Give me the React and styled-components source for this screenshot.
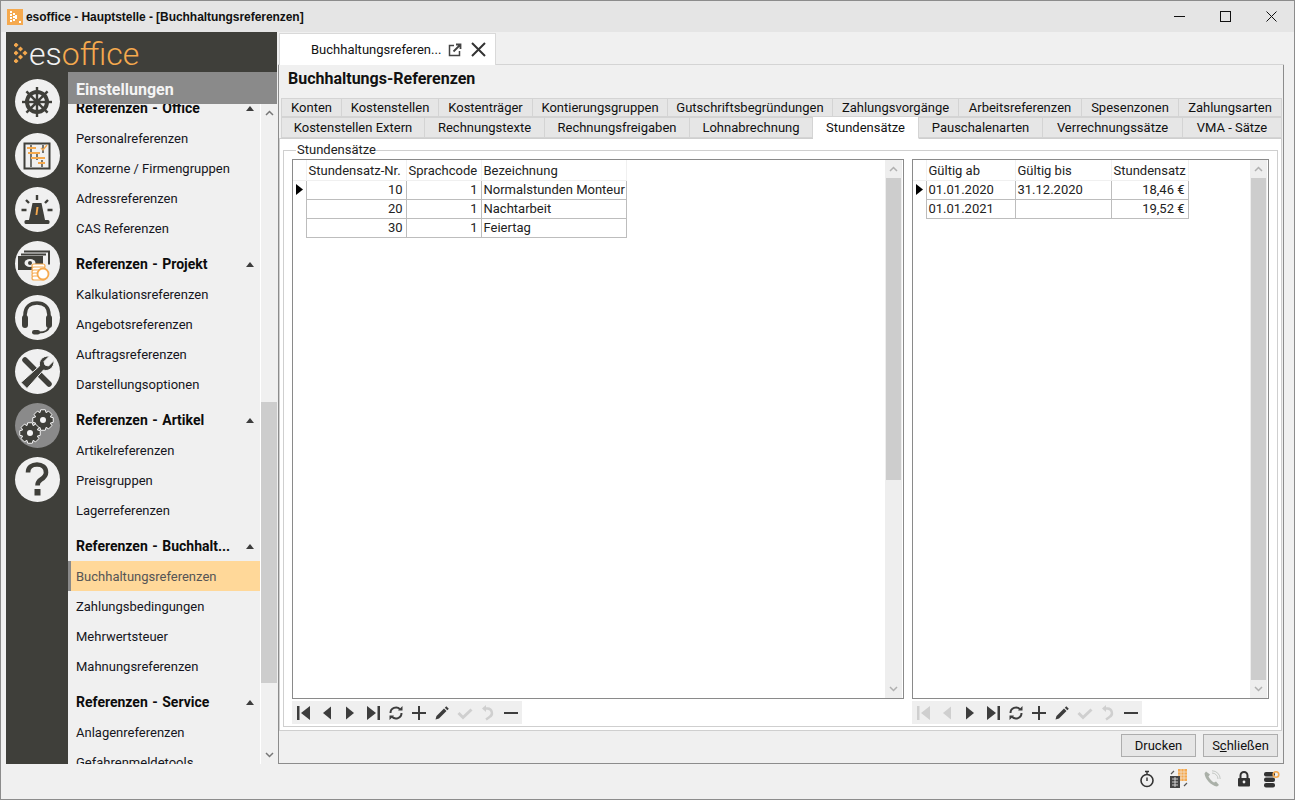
import React from "react";
import styled, { createGlobalStyle } from "styled-components";

const GlobalStyle = createGlobalStyle`
  html, body {
    margin: 0;
    padding: 0;
    background: #f0f0f0;
  }
  * {
    box-sizing: border-box;
  }
`;

const DARK = "#3f3f3a";
const ORANGE = "#f5a94e";

const Window = styled.div`
  width: 1295px;
  height: 800px;
  display: flex;
  flex-direction: column;
  overflow: hidden;
  background: #f0f0f0;
  border: 1px solid #8c8c8c;
  font-family: Roboto, "Liberation Sans", sans-serif;
  font-size: 13px;
  color: #111;
`;

const TitleBar = styled.div`
  height: 31px;
  flex: none;
  display: flex;
  align-items: center;
  background: #e5e5e5;
  padding-left: 6px;
`;

const TitleText = styled.div`
  margin-left: 3px;
  font-family: "Liberation Sans", Arial, sans-serif;
  font-size: 12px;
  font-weight: 700;
  letter-spacing: -0.05px;
  flex: 1;
`;

const WinButton = styled.div`
  width: 46px;
  height: 31px;
  display: flex;
  align-items: center;
  justify-content: center;
`;

const Body = styled.div`
  height: 732px;
  flex: none;
  display: flex;
  padding-left: 5px;
`;

const Sidebar = styled.div`
  width: 271px;
  flex: none;
  display: flex;
  flex-direction: column;
  background: ${DARK};
`;

const LogoBar = styled.div`
  height: 40px;
  flex: none;
  display: flex;
  align-items: center;
  padding-left: 8px;
  gap: 1px;
`;

const LogoText = styled.div`
  font-family: Roboto, sans-serif;
  font-weight: 300;
  font-size: 32px;
  line-height: 40px;
  margin-top: 3px;
  color: #f2f2f2;
  span {
    color: ${ORANGE};
  }
`;

const SideBody = styled.div`
  flex: 1;
  min-height: 0;
  display: flex;
`;

const Rail = styled.div`
  width: 62px;
  flex: none;
  display: flex;
  flex-direction: column;
  align-items: center;
  gap: 9px;
  padding-top: 7px;
`;

const RailButton = styled.div`
  width: 45px;
  height: 45px;
  border-radius: 50%;
  flex: none;
  display: flex;
  align-items: center;
  justify-content: center;
  background: ${(p) => (p.$active ? "#8a8a8a" : "#f0f0f0")};
`;

const NavPane = styled.div`
  flex: 1;
  min-width: 0;
  display: flex;
  flex-direction: column;
  background: #f0f0f0;
`;

const NavTitle = styled.div`
  height: 32px;
  flex: none;
  background: #8a8a8a;
  color: #f4f4f4;
  font-size: 16px;
  font-weight: 700;
  line-height: 36px;
  padding-left: 8px;
`;

const NavScroll = styled.div`
  flex: 1;
  min-height: 0;
  display: flex;
`;

const NavList = styled.div`
  flex: 1;
  min-width: 0;
  overflow: hidden;
`;

const NavInner = styled.div`
  margin-top: -17px;
`;

const NavHead = styled.div`
  height: 36px;
  padding: 6px 6px 0 8px;
  display: flex;
  align-items: center;
  justify-content: space-between;
  font-size: 14px;
  font-weight: 700;
  word-spacing: 1px;
  color: #0c0c0c;
`;

const NavItem = styled.div`
  height: 30px;
  line-height: 32px;
  padding-left: ${(p) => (p.$active ? "5px" : "8px")};
  font-size: 13px;
  color: ${(p) => (p.$active ? "#555" : "#151520")};
  background: ${(p) => (p.$active ? "#ffd899" : "transparent")};
  border-left: ${(p) => (p.$active ? "3px solid #8a8a8a" : "none")};
`;

const ScrollBar = styled.div`
  width: 17px;
  flex: none;
  display: flex;
  flex-direction: column;
  align-items: center;
  background: ${(p) => p.$bg || "#f0f0f0"};
  border-left: ${(p) => (p.$line ? "1px solid #fff" : "none")};
`;

const ScrollArrow = styled.div`
  height: 18px;
  flex: none;
  width: 100%;
  display: flex;
  align-items: center;
  justify-content: center;
`;

const ScrollTrack = styled.div`
  flex: 1;
  min-height: 0;
  width: 100%;
  display: flex;
  flex-direction: column;
  padding: ${(p) => p.$top || 0}px ${(p) => p.$inset || 0}px 0;
`;

const ScrollThumb = styled.div`
  height: ${(p) => p.$h}px;
  flex: none;
  background: #cdcdcd;
`;

const Main = styled.div`
  flex: 1;
  min-width: 0;
  margin: 0 10px 0 1px;
  display: flex;
  flex-direction: column;
`;

const DocTabs = styled.div`
  height: 33px;
  flex: none;
  display: flex;
  align-items: flex-end;
  padding-left: 1px;
  border-bottom: 1px solid #d4d4d4;
`;

const DocTab = styled.div`
  width: 217px;
  height: 32px;
  margin-bottom: -1px;
  display: flex;
  align-items: center;
  gap: 7px;
  padding-left: 31px;
  background: #fff;
  border: 1px solid #d9d9d9;
  border-bottom: none;
  font-size: 13px;
`;

const DocPane = styled.div`
  flex: 1;
  min-height: 0;
  display: flex;
  flex-direction: column;
  border: 1px solid #8c8c8c;
  border-top: none;
`;

const Heading = styled.div`
  height: 33px;
  flex: none;
  line-height: 28px;
  padding-left: 9px;
  font-size: 16px;
  font-weight: 700;
`;

const TabRow = styled.div`
  display: flex;
  height: ${(p) => p.$h}px;
  flex: none;
  padding: 0 2px 0 2px;
  position: relative;
  z-index: ${(p) => p.$z || 0};
`;

const Tab = styled.div`
  width: ${(p) => p.$w}px;
  flex: none;
  display: flex;
  align-items: center;
  justify-content: center;
  font-size: 13px;
  white-space: nowrap;
  background: ${(p) => (p.$active ? "#fff" : "#e6e6e6")};
  border: 1px solid #d4d4d4;
  border-left: ${(p) => (p.$first ? "1px solid #d4d4d4" : "none")};
  border-bottom: ${(p) => (p.$active ? "1px solid #fff" : "1px solid #d4d4d4")};
  ${(p) => p.$active && "margin-top: -1px; height: calc(100% + 2px);"}
`;

const TabPanel = styled.div`
  flex: 1;
  min-height: 0;
  background: #fff;
  border: 1px solid #cfcfcf;
  margin: 0 1px 0 0;
  padding: 4px 3px 3px 3px;
  display: flex;
`;

const Group = styled.fieldset`
  flex: 1;
  min-width: 0;
  margin: 0;
  padding: 2px 8px 0 8px;
  border: 1px solid #cfcfcf;
  display: flex;
  gap: 8px;
`;

const GroupLegend = styled.legend`
  margin-left: 4px;
  padding: 0 0 0 1px;
  font-size: 13px;
  line-height: 14px;
  color: #222;
`;

const GridColumn = styled.div`
  width: ${(p) => p.$w}px;
  flex: none;
  display: flex;
  flex-direction: column;
`;

const GridBox = styled.div`
  height: 540px;
  flex: none;
  display: flex;
  padding-right: 1px;
  border: 1px solid #8a8a8a;
  background: #fff;
`;

const GridArea = styled.div`
  flex: 1;
  min-width: 0;
`;

const Table = styled.table`
  width: ${(p) => p.$w}px;
  border-collapse: collapse;
  table-layout: fixed;
  font-size: 13px;
`;

const HeadCell = styled.th`
  width: ${(p) => p.$w}px;
  height: 20px;
  padding: 1px 3px 0 2px;
  font-weight: 400;
  text-align: left;
  white-space: nowrap;
  overflow: hidden;
  border-right: 1px solid #f0f0f0;
  border-bottom: 1px solid #f0f0f0;
  color: #222;
`;

const Cell = styled.td`
  height: 19px;
  padding: 1px 3px 0 2px;
  line-height: 16px;
  text-align: ${(p) => (p.$right ? "right" : "left")};
  white-space: nowrap;
  overflow: hidden;
  border: 1px solid #bdbdbd;
  color: #222;
`;

const MarkerCell = styled.td`
  height: 19px;
  padding: 0 0 0 3px;
  border: none;
  line-height: 0;
`;

const Pager = styled.div`
  height: 23px;
  width: 230px;
  margin-top: 2px;
  display: flex;
  align-items: center;
  background: #efefef;
`;

const PagerButton = styled.div`
  width: 23px;
  flex: none;
  display: flex;
  justify-content: center;
  color: ${(p) => (p.$off ? "#cfcfcf" : "#3d3d3d")};
`;

const Footer = styled.div`
  height: 32px;
  flex: none;
  display: flex;
  justify-content: flex-end;
  align-items: flex-start;
  gap: 7px;
  padding: 3px 5px 0 0;
`;

const Button = styled.div`
  width: 75px;
  height: 23px;
  display: flex;
  align-items: center;
  justify-content: center;
  font-size: 13px;
  background: #e6e6e6;
  border: 1px solid #adadad;
  u {
    text-decoration: underline;
  }
`;

const StatusBar = styled.div`
  flex: 1;
  min-height: 0;
  display: flex;
  align-items: center;
  justify-content: flex-end;
  padding: 0 10px 6px 0;
`;

const StatusIcon = styled.div`
  width: ${(p) => p.$w}px;
  flex: none;
  display: flex;
  justify-content: center;
`;

// gear outline, used for the settings button in the rail
const gearPath = (cx, cy, r, teeth) => {
  const pts = [];
  const step = (Math.PI * 2) / teeth;
  for (let i = 0; i < teeth; i++) {
    const a = i * step;
    [
      [-0.5, 0.76],
      [-0.28, 1],
      [0.28, 1],
      [0.5, 0.76],
    ].forEach(([o, k]) => {
      const t = a + o * step;
      pts.push(`${(cx + Math.cos(t) * r * k).toFixed(2)} ${(cy + Math.sin(t) * r * k).toFixed(2)}`);
    });
  }
  return "M" + pts.join("L") + "Z";
};

const Diamonds = () => (
  <svg width="14" height="20" viewBox="0 0 14 20" fill={ORANGE} style={{ marginTop: 2 }}>
    {[
      [2, 2],
      [2, 10],
      [2, 18],
      [6.5, 6],
      [6.5, 14],
      [11, 10],
    ].map(([x, y]) => (
      <rect key={`${x}-${y}`} x={x - 1.8} y={y - 1.8} width="3.6" height="3.6" transform={`rotate(45 ${x} ${y})`} />
    ))}
  </svg>
);

const AppIcon = () => (
  <svg width="16" height="16" viewBox="0 0 16 16">
    <rect width="16" height="16" fill="#f5a94e" />
    {[
      [3, 2],
      [3, 5],
      [3, 8],
      [3, 11],
      [6, 4],
      [6, 7],
      [6, 10],
      [8, 6],
      [8, 8],
    ].map(([x, y]) => (
      <rect key={`${x}-${y}`} x={x} y={y} width="2" height="2" fill="#fff" />
    ))}
    <rect x="12" y="12" width="2" height="2" fill="#fff" />
  </svg>
);

const WheelIcon = () => (
  <svg width="32" height="32" viewBox="0 0 32 32" stroke={DARK} fill="none">
    {[0, 45, 90, 135].map((a) => (
      <line key={a} x1="1" y1="16" x2="31" y2="16" strokeWidth="2.4" transform={`rotate(${a} 16 16)`} />
    ))}
    <circle cx="16" cy="16" r="10" strokeWidth="4" />
    <circle cx="16" cy="16" r="3.6" fill={DARK} strokeWidth="0" />
  </svg>
);

const BoardIcon = () => (
  <svg width="28" height="28" viewBox="0 0 28 28" fill="none">
    <rect x="1.5" y="1.5" width="25" height="25" stroke={DARK} strokeWidth="2" />
    <path d="M8 3v22M20 3v8M14 12v6M19 18v7" stroke={DARK} strokeWidth="1.4" />
    <path d="M4 6h9M5 11h12M8 16h14M15 21h7" stroke={ORANGE} strokeWidth="2" />
    <path d="M18 6l2 2 4-5" stroke={ORANGE} strokeWidth="1.4" />
  </svg>
);

const AlarmIcon = () => (
  <svg width="34" height="34" viewBox="0 0 34 34">
    <path d="M12.5 10h9l3.500 17h-16z" fill={DARK} />
    <path d="M16.5 14h2l-1.200 8h-1.800z" fill={ORANGE} />
    <rect x="4.5" y="27" width="25" height="4" rx="1.5" fill={DARK} />
    <path d="M17 2v5M6 7l3 3M28 7l-3 3M1.5 17h5M27.5 17h5" stroke={DARK} strokeWidth="2.4" />
  </svg>
);

const MoneyIcon = () => (
  <svg width="38" height="34" viewBox="0 0 38 34">
    <path d="M6 4.500h25v13M3 7.500h25" fill="none" stroke={DARK} strokeWidth="2" />
    <rect x="0" y="9" width="25" height="14" fill={DARK} />
    <ellipse cx="12" cy="16" rx="5.500" ry="4" fill="#f0f0f0" />
    <circle cx="12" cy="16" r="2" fill={DARK} />
    {[18, 21, 24, 27, 30].map((y) => (
      <rect key={y} x="14" y={y - 1} width="13" height="4" rx="2" fill="#fff" stroke={ORANGE} strokeWidth="1.2" />
    ))}
    <circle cx="25" cy="27" r="5.500" fill="#fff" stroke={ORANGE} strokeWidth="1.800" />
  </svg>
);

const HeadsetIcon = () => (
  <svg width="34" height="36" viewBox="0 0 34 36" fill="none">
    <path d="M5 18v-3C5 7 10 3 17 3s12 4 12 12v3" stroke={DARK} strokeWidth="3.600" />
    <rect x="2" y="15" width="6" height="13" rx="3" fill={DARK} />
    <rect x="26" y="15" width="6" height="13" rx="3" fill={DARK} />
    <path d="M29 26c0 4-4 6.500-10 6.500" stroke={DARK} strokeWidth="2" />
    <rect x="12" y="30" width="8" height="4.500" rx="2.200" fill={DARK} />
  </svg>
);

const ToolsIcon = () => (
  <svg width="36" height="36" viewBox="0 0 36 36" fill="none">
    <path d="M6 6l24 24" stroke={DARK} strokeWidth="5.500" strokeLinecap="round" />
    <path d="M8 34.500L2 28.500 20.500 12C19.500 7 23 1.500 30.500 2L25 7.500 26 11l3.500 1L35 6.500C35.500 14 29 18 24.500 16z" fill={DARK} stroke="#f0f0f0" strokeWidth="1" />
  </svg>
);

const GearsIcon = () => (
  <svg width="36" height="36" viewBox="0 0 36 36">
    <path d={gearPath(24, 12, 10.5, 8)} fill={DARK} stroke="#f4f4f4" strokeWidth="1" />
    <circle cx="24" cy="12" r="3" fill="#f4f4f4" />
    <path d={gearPath(11, 25, 10.5, 8)} fill={DARK} stroke="#f4f4f4" strokeWidth="1" />
    <circle cx="11" cy="25" r="3" fill="#f4f4f4" />
  </svg>
);

const QuestionIcon = () => (
  <svg width="24" height="36" viewBox="0 0 24 36" fill="none">
    <path d="M3 10.500C3 5.500 7 2.500 12 2.500s9 3 9 8c0 3.500-2.500 5.500-5 7-2.500 1.500-3.500 3-3.500 6" stroke={DARK} strokeWidth="4.600" />
    <rect x="9.5" y="27" width="6" height="6.5" fill={DARK} />
  </svg>
);

const CollapseMark = () => (
  <svg width="8" height="5" viewBox="0 0 8 5">
    <path d="M4 0l4 5H0z" fill="#3d3d3d" />
  </svg>
);

const Chevron = ({ down, color = "#777" }) => (
  <svg width="9" height="6" viewBox="0 0 9 6" fill="none">
    <path d={down ? "M1 1l3.500 3.500L8 1" : "M1 5l3.500-3.500L8 5"} stroke={color} strokeWidth="1.5" />
  </svg>
);

const Marker = () => (
  <svg width="7" height="11" viewBox="0 0 7 11">
    <path d="M0 0l7 5.500-7 5.500z" fill="#000" />
  </svg>
);

const PagerGlyph = ({ kind }) => {
  const c = "currentColor";
  const shapes = {
    first: (
      <>
        <rect x="2" y="2" width="2.5" height="14" fill={c} />
        <path d="M15 2v14L6 9z" fill={c} />
      </>
    ),
    prev: <path d="M13 2.500v13L5 9z" fill={c} />,
    next: <path d="M5 2.500v13L13 9z" fill={c} />,
    last: (
      <>
        <rect x="13.5" y="2" width="2.5" height="14" fill={c} />
        <path d="M3 2v14l9-7z" fill={c} />
      </>
    ),
    refresh: (
      <>
        <path d="M3.500 9a5.500 5.500 0 0 1 9.500-3.800M14.500 9a5.500 5.500 0 0 1-9.500 3.800" fill="none" stroke={c} strokeWidth="2" />
        <path d="M11 6.500h4.500V2zM7 11.500H2.500V16z" fill={c} />
      </>
    ),
    add: <path d="M9 2v14M2 9h14" stroke={c} strokeWidth="2" />,
    edit: (
      <>
        <path d="M2.500 15.500l1-3.500 7.500-7.500 2.500 2.500L6 14.500z" fill={c} />
        <path d="M11.800 3.700l1.500-1.500 2.500 2.500-1.500 1.500z" fill={c} />
      </>
    ),
    check: <path d="M2.500 9l4.500 4.500 8.500-8" fill="none" stroke={c} strokeWidth="3" />,
    undo: (
      <>
        <path d="M5 4.500h3.500a4.500 4.500 0 0 1 2 8.500l-3.500 2.500" fill="none" stroke={c} strokeWidth="2.4" />
        <path d="M7 1v7L3 4.500z" fill={c} />
      </>
    ),
    remove: <path d="M2 9h14" stroke={c} strokeWidth="2" />,
  };
  return (
    <svg width="18" height="18" viewBox="0 0 18 18">
      {shapes[kind]}
    </svg>
  );
};

const navSections = [
  { title: "Referenzen - Office", items: ["Personalreferenzen", "Konzerne / Firmengruppen", "Adressreferenzen", "CAS Referenzen"] },
  { title: "Referenzen - Projekt", items: ["Kalkulationsreferenzen", "Angebotsreferenzen", "Auftragsreferenzen", "Darstellungsoptionen"] },
  { title: "Referenzen - Artikel", items: ["Artikelreferenzen", "Preisgruppen", "Lagerreferenzen"] },
  { title: "Referenzen - Buchhalt...", items: ["Buchhaltungsreferenzen", "Zahlungsbedingungen", "Mehrwertsteuer", "Mahnungsreferenzen"] },
  { title: "Referenzen - Service", items: ["Anlagenreferenzen", "Gefahrenmeldetools"] },
];

const tabsTop = [
  ["Konten", 61],
  ["Kostenstellen", 97],
  ["Kostenträger", 94],
  ["Kontierungsgruppen", 135],
  ["Gutschriftsbegründungen", 165],
  ["Zahlungsvorgänge", 126],
  ["Arbeitsreferenzen", 123],
  ["Spesenzonen", 97],
  ["Zahlungsarten", 103],
];

const tabsBottom = [
  ["Kostenstellen Extern", 144],
  ["Rechnungstexte", 120],
  ["Rechnungsfreigaben", 145],
  ["Lohnabrechnung", 123],
  ["Stundensätze", 106, true],
  ["Pauschalenarten", 124],
  ["Verrechnungssätze", 140],
  ["VMA - Sätze", 99],
];

const pagerKinds = ["first", "prev", "next", "last", "refresh", "add", "edit", "check", "undo", "remove"];

const GridPager = ({ off }) => (
  <Pager>
    {pagerKinds.map((k) => (
      <PagerButton key={k} $off={off.includes(k)}>
        <PagerGlyph kind={k} />
      </PagerButton>
    ))}
  </Pager>
);

const GridScroll = ({ thumb }) => (
  <ScrollBar $bg="#eeeeee">
    <ScrollArrow>
      <Chevron color="#b0b0b0" />
    </ScrollArrow>
    <ScrollTrack $inset={1}>
      <ScrollThumb $h={thumb} />
    </ScrollTrack>
    <ScrollArrow>
      <Chevron down color="#b0b0b0" />
    </ScrollArrow>
  </ScrollBar>
);

const DataGrid = ({ width, columns, rows, thumb, off }) => (
  <GridColumn $w={width}>
    <GridBox>
      <GridArea>
        <Table $w={columns.reduce((sum, c) => sum + c.width, 13)}>
          <thead>
            <tr>
              <HeadCell $w={13} />
              {columns.map((c) => (
                <HeadCell key={c.name} $w={c.width}>
                  {c.name}
                </HeadCell>
              ))}
            </tr>
          </thead>
          <tbody>
            {rows.map((row, i) => (
              <tr key={i}>
                <MarkerCell>{i === 0 && <Marker />}</MarkerCell>
                {row.map((v, j) => (
                  <Cell key={j} $right={columns[j].right}>
                    {v}
                  </Cell>
                ))}
              </tr>
            ))}
          </tbody>
        </Table>
      </GridArea>
      <GridScroll thumb={thumb} />
    </GridBox>
    <GridPager off={off} />
  </GridColumn>
);

export default function App() {
  return (
    <Window>
      <GlobalStyle />
      <TitleBar>
        <AppIcon />
        <TitleText>esoffice - Hauptstelle - [Buchhaltungsreferenzen]</TitleText>
        <WinButton>
          <svg width="11" height="11" viewBox="0 0 11 11">
            <path d="M0 5.500h11" stroke="#111" />
          </svg>
        </WinButton>
        <WinButton>
          <svg width="11" height="11" viewBox="0 0 11 11">
            <rect x=".5" y=".5" width="10" height="10" fill="none" stroke="#111" />
          </svg>
        </WinButton>
        <WinButton>
          <svg width="11" height="11" viewBox="0 0 11 11">
            <path d="M.5.500l10 10M10.500.500l-10 10" stroke="#111" />
          </svg>
        </WinButton>
      </TitleBar>

      <Body>
        <Sidebar>
          <LogoBar>
            <Diamonds />
            <LogoText>
              es<span>office</span>
            </LogoText>
          </LogoBar>
          <SideBody>
            <Rail>
              <RailButton><WheelIcon /></RailButton>
              <RailButton><BoardIcon /></RailButton>
              <RailButton><AlarmIcon /></RailButton>
              <RailButton><MoneyIcon /></RailButton>
              <RailButton><HeadsetIcon /></RailButton>
              <RailButton><ToolsIcon /></RailButton>
              <RailButton $active><GearsIcon /></RailButton>
              <RailButton><QuestionIcon /></RailButton>
            </Rail>
            <NavPane>
              <NavTitle>Einstellungen</NavTitle>
              <NavScroll>
                <NavList>
                  <NavInner>
                    {navSections.map((s) => (
                      <div key={s.title}>
                        <NavHead>
                          {s.title}
                          <CollapseMark />
                        </NavHead>
                        {s.items.map((item) => (
                          <NavItem key={item} $active={item === "Buchhaltungsreferenzen"}>
                            {item}
                          </NavItem>
                        ))}
                      </div>
                    ))}
                  </NavInner>
                </NavList>
                <ScrollBar $line>
                  <ScrollArrow>
                    <Chevron />
                  </ScrollArrow>
                  <ScrollTrack $top={280}>
                    <ScrollThumb $h={281} />
                  </ScrollTrack>
                  <ScrollArrow>
                    <Chevron down />
                  </ScrollArrow>
                </ScrollBar>
              </NavScroll>
            </NavPane>
          </SideBody>
        </Sidebar>

        <Main>
          <DocTabs>
            <DocTab>
              Buchhaltungsreferen...
              <svg width="14" height="14" viewBox="0 0 14 14" fill="none" stroke="#444">
                <path d="M6 2.500H1.500v10h10V8" strokeWidth="1.5" />
                <path d="M5.500 8.500L12 2M8 1.500h4.500V6" strokeWidth="1.8" />
              </svg>
              <svg width="15" height="15" viewBox="0 0 15 15" stroke="#333" strokeWidth="2" style={{ marginLeft: 2 }}>
                <path d="M1 1l13 13M14 1L1 14" />
              </svg>
            </DocTab>
          </DocTabs>
          <DocPane>
            <Heading>Buchhaltungs-Referenzen</Heading>
            <TabRow $h={19}>
              {tabsTop.map(([name, w], i) => (
                <Tab key={name} $w={w} $first={i === 0}>
                  {name}
                </Tab>
              ))}
            </TabRow>
            <TabRow $h={21} $z={1}>
              {tabsBottom.map(([name, w, active], i) => (
                <Tab key={name} $w={w} $first={i === 0} $active={active}>
                  {name}
                </Tab>
              ))}
            </TabRow>
            <TabPanel>
              <Group>
                <GroupLegend>Stundensätze</GroupLegend>
                <DataGrid
                  width={612}
                  thumb={302}
                  off={["check", "undo"]}
                  columns={[
                    { name: "Stundensatz-Nr.", width: 100, right: true },
                    { name: "Sprachcode", width: 75, right: true },
                    { name: "Bezeichnung", width: 145 },
                  ]}
                  rows={[
                    ["10", "1", "Normalstunden Monteur"],
                    ["20", "1", "Nachtarbeit"],
                    ["30", "1", "Feiertag"],
                  ]}
                />
                <DataGrid
                  width={357}
                  thumb={502}
                  off={["first", "prev", "check", "undo"]}
                  columns={[
                    { name: "Gültig ab", width: 89 },
                    { name: "Gültig bis", width: 96 },
                    { name: "Stundensatz", width: 77, right: true },
                  ]}
                  rows={[
                    ["01.01.2020", "31.12.2020", "18,46 €"],
                    ["01.01.2021", "", "19,52 €"],
                  ]}
                />
              </Group>
            </TabPanel>
            <Footer>
              <Button>Drucken</Button>
              <Button>
                <span>
                  S<u>c</u>hließen
                </span>
              </Button>
            </Footer>
          </DocPane>
        </Main>
      </Body>

      <StatusBar>
        <StatusIcon $w={32}>
          <svg width="16" height="18" viewBox="0 0 16 18" fill="none" stroke="#333">
            <circle cx="8" cy="10.500" r="6" strokeWidth="1.6" />
            <path d="M6 1.500h4M8 2v3M8 7.500v3.500" strokeWidth="1.4" />
          </svg>
        </StatusIcon>
        <StatusIcon $w={32}>
          <svg width="20" height="20" viewBox="0 0 20 20">
            <rect x="9" y="0" width="9" height="12" fill={ORANGE} />
            <path d="M9 3h9M9 6h9M9 9h9M12 0v12M15 0v12" stroke="#f0f0f0" strokeWidth=".6" />
            <rect x="1" y="7" width="10" height="12" fill="#444" />
            <path d="M3 10h6M3 13h6M3 16h6M6 8v10" stroke="#eee" strokeWidth=".8" />
            <path d="M2 5l3-3M18 14l-3 3" stroke="#555" strokeWidth="1.2" />
          </svg>
        </StatusIcon>
        <StatusIcon $w={33}>
          <svg width="18" height="18" viewBox="0 0 18 18" fill="none">
            <path d="M3 1.500L1.500 3.500C2 9 8 15.500 14 16.500L16 15l-3-3.500-2 1C9 11.500 6.500 9 5.500 6.500l1.500-2z" fill="#aab0a8" />
            <path d="M9 3a6 6 0 0 1 6 6M9 .8a8.200 8.200 0 0 1 8.200 8.200" stroke="#c4c8c4" />
          </svg>
        </StatusIcon>
        <StatusIcon $w={32}>
          <svg width="14" height="16" viewBox="0 0 14 16">
            <path d="M3.500 7V4.500a3.500 3.500 0 0 1 7 0V7" fill="none" stroke="#333" strokeWidth="2" />
            <rect x="1" y="7" width="12" height="8.500" rx="1" fill="#333" />
            <circle cx="7" cy="11" r="1.4" fill="#f0f0f0" />
          </svg>
        </StatusIcon>
        <StatusIcon $w={24}>
          <svg width="16" height="18" viewBox="0 0 16 18">
            <rect x="0" y="2" width="11" height="4.500" rx="2" fill="#333" />
            <rect x="0" y="7.5" width="11" height="4.500" rx="2" fill="#333" />
            <rect x="0" y="13" width="11" height="4.500" rx="2" fill="#333" />
            <circle cx="12" cy="4.500" r="2.800" fill="none" stroke={ORANGE} strokeWidth="1.6" />
          </svg>
        </StatusIcon>
      </StatusBar>
    </Window>
  );
}
